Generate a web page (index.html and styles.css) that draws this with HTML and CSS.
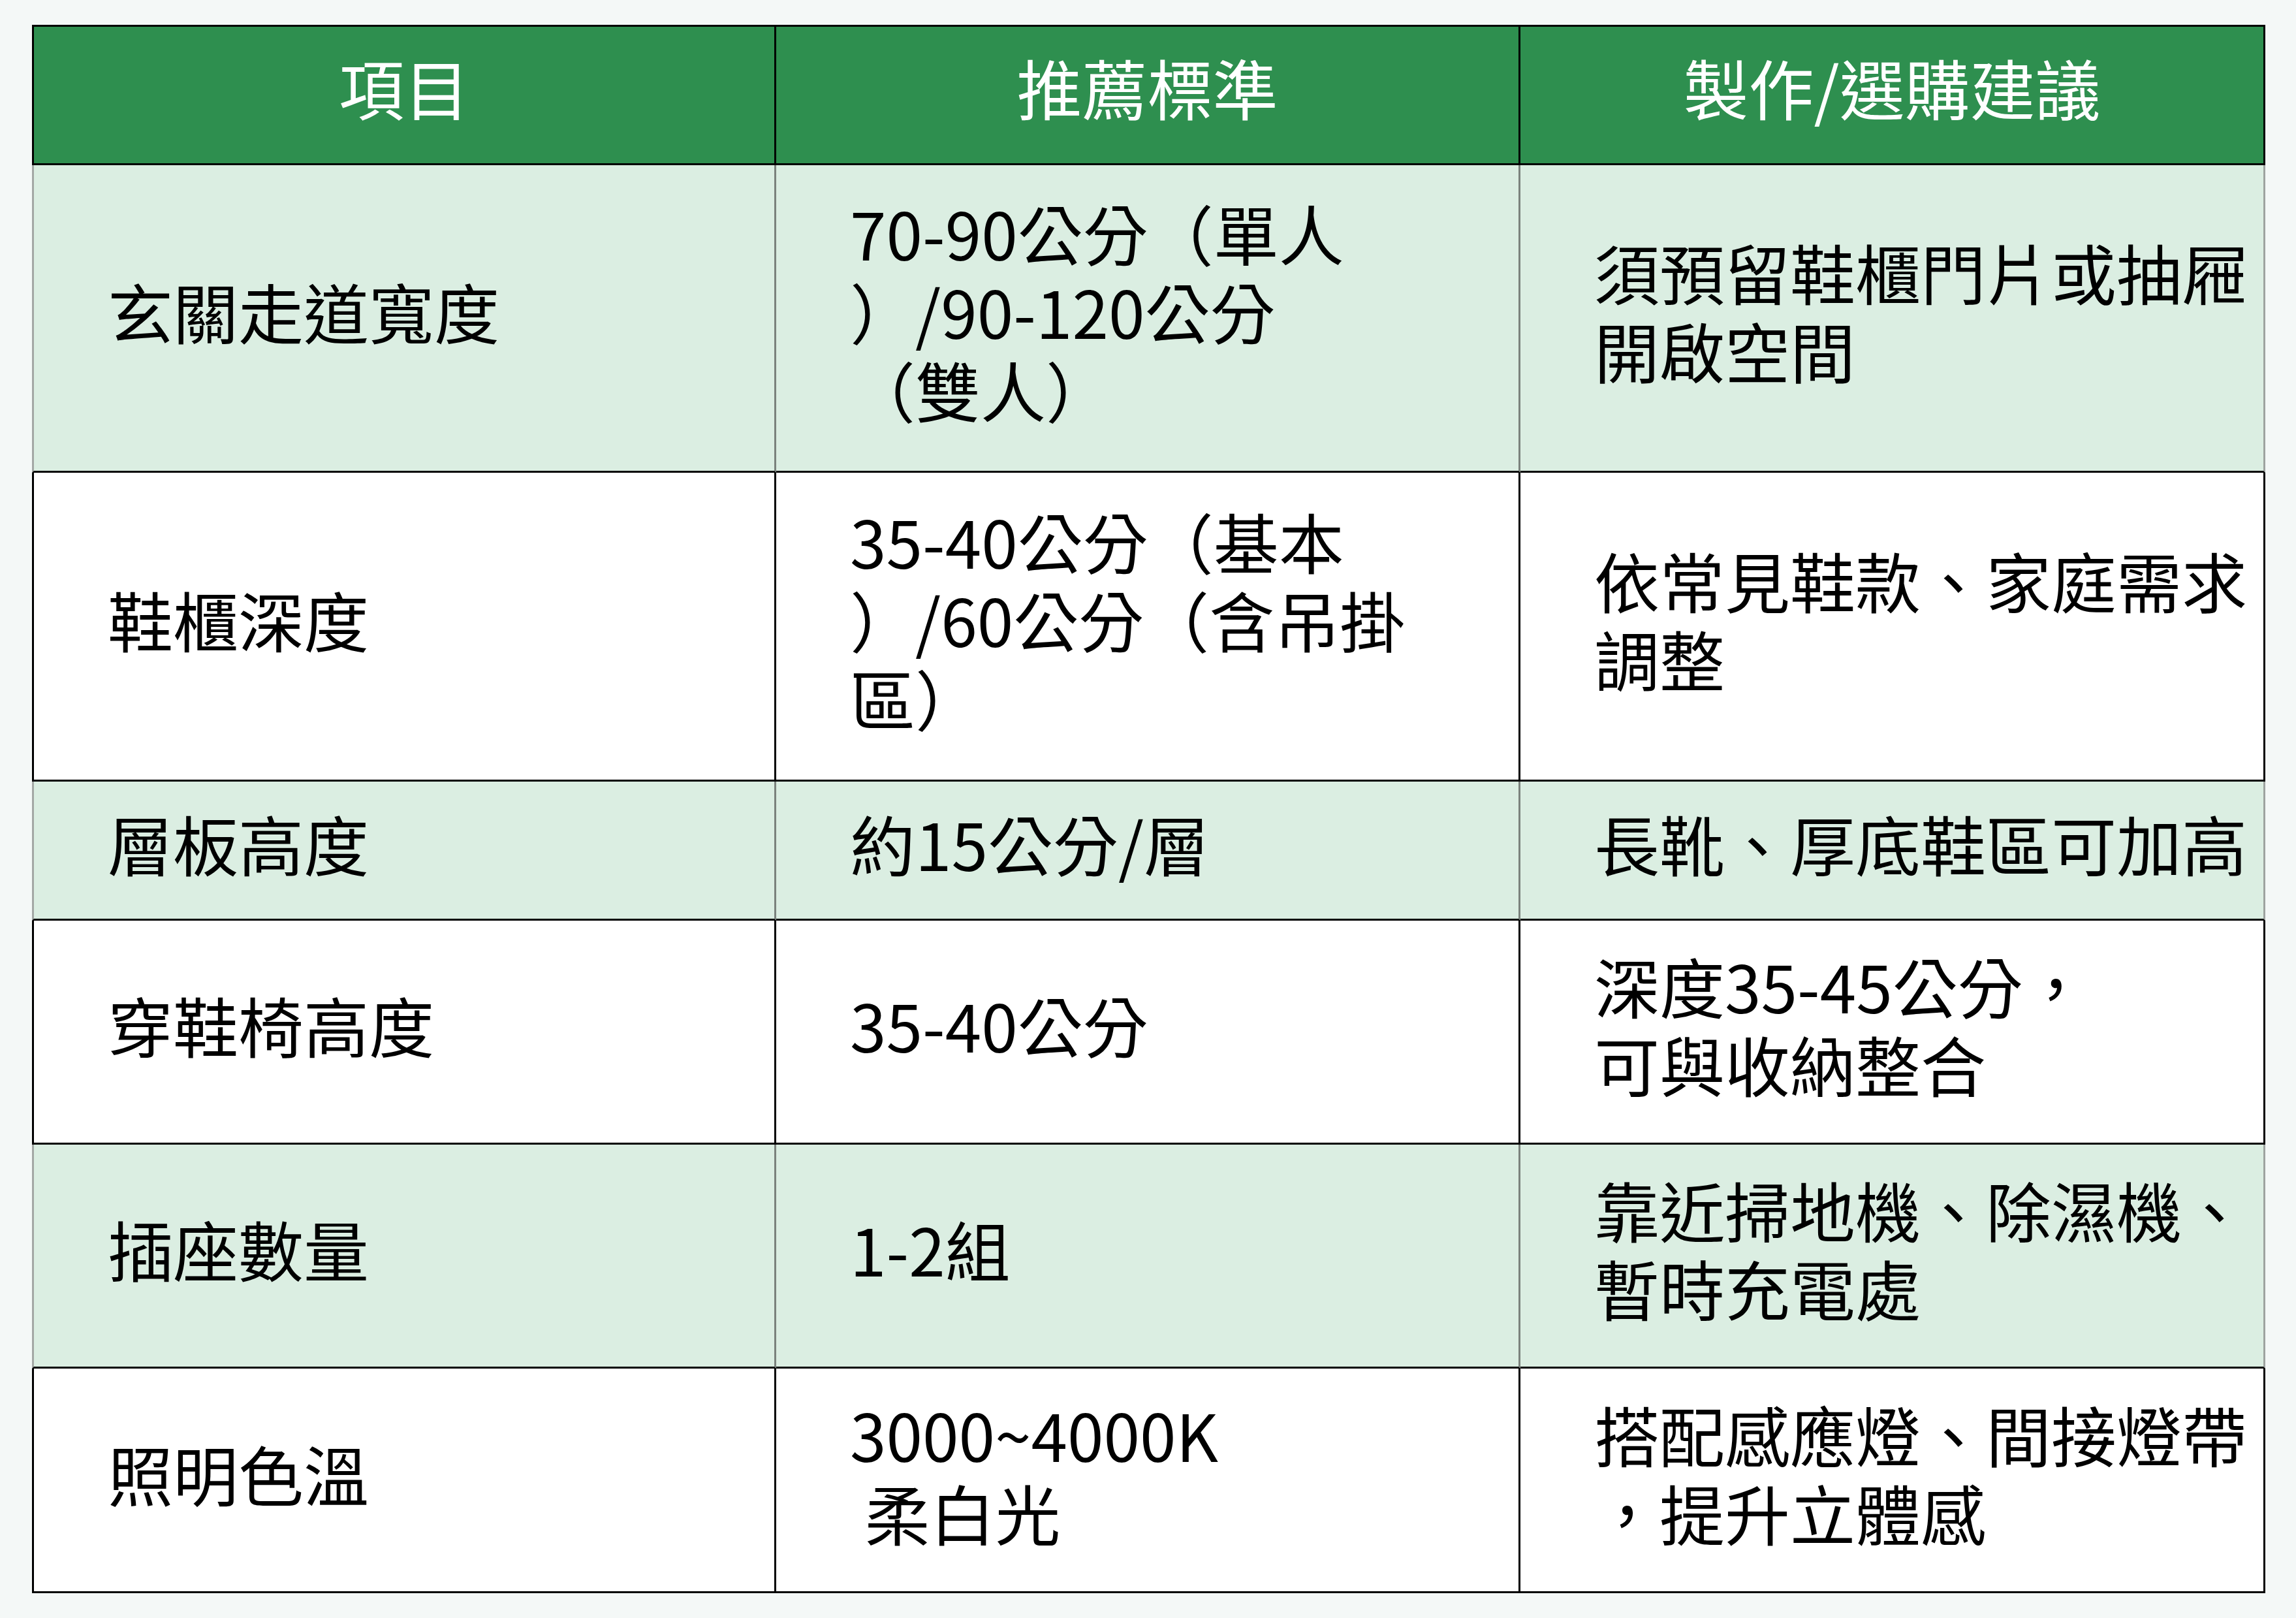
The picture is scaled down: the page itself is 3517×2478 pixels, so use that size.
FILE: index.html
```html
<!DOCTYPE html>
<html lang="zh-Hant">
<head>
<meta charset="utf-8">
<title>玄關鞋櫃尺寸建議</title>
<link rel="stylesheet" href="styles.css">
</head>
<body>
<table class="spec">
  <colgroup>
    <col class="c1"><col class="c2"><col class="c3">
  </colgroup>
  <thead>
    <tr class="r-head">
      <th>項目</th>
      <th>推薦標準</th>
      <th>製作/選購建議</th>
    </tr>
  </thead>
  <tbody>
    <tr class="alt r-3">
      <td>玄關走道寬度</td>
      <td>70-90公分（單人<br>）/90-120公分<br>（雙人）</td>
      <td>須預留鞋櫃門片或抽屜<br>開啟空間</td>
    </tr>
    <tr class="r-3b">
      <td>鞋櫃深度</td>
      <td>35-40公分（基本<br>）/60公分（含吊掛<br>區）</td>
      <td>依常見鞋款、家庭需求<br>調整</td>
    </tr>
    <tr class="alt r-1">
      <td>層板高度</td>
      <td>約15公分/層</td>
      <td>長靴、厚底鞋區可加高</td>
    </tr>
    <tr class="r-2">
      <td>穿鞋椅高度</td>
      <td>35-40公分</td>
      <td>深度35-45公分，<br>可與收納整合</td>
    </tr>
    <tr class="alt r-2">
      <td>插座數量</td>
      <td>1-2組</td>
      <td>靠近掃地機、除濕機、<br>暫時充電處</td>
    </tr>
    <tr class="r-2 last">
      <td>照明色溫</td>
      <td>3000~4000K<br>&nbsp;柔白光</td>
      <td>搭配感應燈、間接燈帶<br>，提升立體感</td>
    </tr>
  </tbody>
</table>
</body>
</html>
```

FILE: styles.css
```css
html, body {
  margin: 0;
  padding: 0;
  background: #f4f8f7;
}

body {
  padding: 38px 0 38px 49px;
  font-family: "Noto Sans CJK TC", "Noto Sans", sans-serif;
  color: #000;
}

.spec {
  width: 3421px;
  table-layout: fixed;
  border-collapse: separate;
  border-spacing: 0;
  font-size: 100px;
  line-height: 120px;
  font-weight: 400;
}

.c1 { width: 1140px; }
.c2 { width: 1140px; }
.c3 { width: 1141px; }

.spec th,
.spec td {
  border-right: 3px solid #000;
  border-bottom: 3px solid #000;
  padding: 0 4px 22px 113px;
  vertical-align: middle;
  white-space: nowrap;
  text-align: left;
}

.spec th:first-child,
.spec td:first-child {
  border-left: 3px solid #000;
}

.spec th {
  border-top: 3px solid #000;
  background: #2e8f4f;
  color: #fff;
  font-weight: 400;
  text-align: center;
  padding: 0 0 26px 0;
}

.spec tbody tr {
  background: #fff;
}

.spec tbody tr.alt {
  background: #dbeee2;
}

.spec tbody tr.alt td {
  border-right-color: #7b827d;
}

.spec tbody tr.alt td:first-child {
  border-left-color: #a3a8a5;
}

.spec tbody tr.alt td:last-child {
  border-right-color: #9ea3a0;
}

.r-head { height: 215px; }
.r-3 { height: 471px; }
.r-3b { height: 473px; }
.r-1 { height: 213px; }
.r-2 { height: 343px; }
.r-2.last { height: 344px; }
```
